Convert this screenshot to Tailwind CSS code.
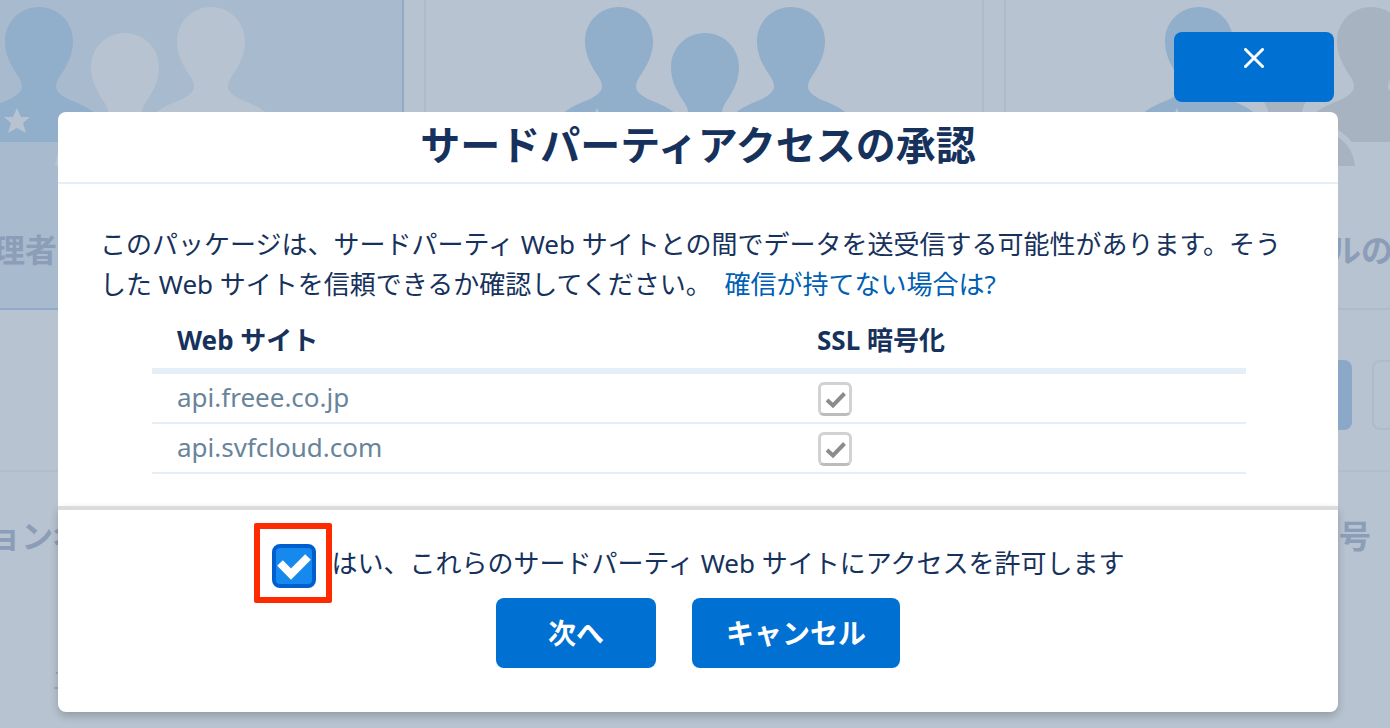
<!DOCTYPE html>
<html lang="ja">
<head>
<meta charset="utf-8">
<title>サードパーティアクセスの承認</title>
<script src="https://cdn.jsdelivr.net/npm/@tailwindcss/browser@4"></script>
</head>
<body class="min-h-screen bg-[#b7c3d0] font-['Noto_Sans','Noto_Sans_CJK_JP',sans-serif] text-[26px] leading-10 text-[#16325c]">
<svg class="hidden" aria-hidden="true">
  <defs>
    <path id="person" d="M0 0C19 0 34 15 34 34C34 48 28 58 23 66C19 72 17 75 17 80C17 84 22 89 31 93C41 97 51 101 59 109C65 115 69 123 70 133C70 134 69 135 68 135H-68C-69 135 -70 134 -70 133C-69 123 -65 115 -59 109C-51 101 -41 97 -31 93C-22 89 -17 84 -17 80C-17 75 -19 72 -23 66C-28 58 -34 48 -34 34C-34 15 -19 0 0 0Z"/>
    <path id="star" d="M0 -13L4 -4L13 -4L6 2L9 12L0 7L-9 12L-6 2L-13 -4L-4 -4Z"/>
  </defs>
</svg>
<div class="relative min-h-screen overflow-hidden">

  <!-- Install page, dimmed behind the dialog -->
  <div class="absolute inset-0 overflow-hidden text-[32px] font-bold text-[#8b9db7]" aria-hidden="true">
    <div class="flex h-[310px] justify-center gap-5 pl-[18px]">
      <div class="w-[560px] shrink-0 border-x-2 border-b-2 border-[#8fabc8] bg-[#a8bacd]">
        <svg class="mx-auto h-[166px] w-[320px]" viewBox="0 0 320 166">
          <use href="#person" x="75" y="7" fill="#91aeca"/><use href="#person" x="247" y="7" fill="#b7c3d0"/>
          <use href="#person" x="161" y="33" fill="#b7c3d0" stroke="#a8bacd" stroke-width="12" paint-order="stroke"/>
          <use href="#star" x="53" y="121" fill="#b7c3d0"/>
        </svg>
        <p class="mt-[64px] pl-[115px] whitespace-nowrap">管理者のみ</p>
      </div>
      <div class="w-[560px] shrink-0 border-x-2 border-b-2 border-[#afbbc9]">
        <svg class="mx-auto h-[166px] w-[320px]" viewBox="0 0 320 166">
          <g fill="#91aeca"><use href="#person" x="75" y="7"/><use href="#person" x="247" y="7"/></g>
          <use href="#person" x="161" y="33" fill="#91aeca" stroke="#b7c3d0" stroke-width="12" paint-order="stroke"/>
          <use href="#star" x="53" y="121" fill="#b7c3d0"/>
        </svg>
      </div>
      <div class="w-[560px] shrink-0 border-x-2 border-b-2 border-[#afbbc9]">
        <svg class="mx-auto h-[166px] w-[320px]" viewBox="0 0 320 166">
          <use href="#person" x="75" y="7" fill="#91aeca"/><use href="#person" x="247" y="7" fill="#a8b3c2"/>
          <use href="#person" x="161" y="33" fill="#a8b3c2" stroke="#b7c3d0" stroke-width="12" paint-order="stroke"/>
          <use href="#star" x="53" y="121" fill="#b7c3d0"/>
        </svg>
        <p class="mt-[64px] pl-[67px] whitespace-nowrap">特定のプロファイルの</p>
      </div>
    </div>
    <div class="flex h-[162px] items-center justify-end gap-5 border-b-2 border-[#b1bdca] pt-[10px]">
      <div class="h-[70px] w-[200px] rounded-lg bg-[#8ba8c9]"></div>
      <div class="-mr-5 h-[70px] w-[38px] rounded-lg border-2 border-[#afbbc9]"></div>
    </div>
    <div class="flex h-[128px] items-center justify-between pr-[19px]">
      <span class="-ml-[106px]">バージョン名</span>
      <span>番号</span>
    </div>
    <p class="pt-[60px] pl-[52px] text-[26px] font-normal text-[#8ba8c9]">エ</p>
  </div>

  <!-- Dialog -->
  <div class="relative flex min-h-screen flex-col pt-8 pr-[52px] pb-4 pl-[58px]">
    <button type="button" aria-label="閉じる" class="mr-1 flex h-[70px] w-40 justify-center self-end rounded-lg bg-[#0070d2] pt-4">
      <svg class="size-5" viewBox="0 0 20 20" fill="none" stroke="#fff" stroke-width="3" stroke-linecap="round"><path d="M1.500 1.500L18.500 18.500M18.500 1.500L1.500 18.500"/></svg>
    </button>
    <section role="dialog" aria-labelledby="title" class="mt-[10px]">
      <header class="rounded-t-lg border-b-2 border-[#e4eff8] bg-white">
        <h1 id="title" class="h-[70px] text-center text-[40px] leading-[66px] font-bold">サードパーティアクセスの承認</h1>
      </header>
      <div class="bg-white pt-10 pr-[38px] pb-8 pl-[42px]">
        <p>このパッケージは、サードパーティ Web サイトとの間でデータを送受信する可能性があります。そうした Web サイトを信頼できるか確認してください。 <a href="#" class="ml-[6px] text-[#005fb2]">確信が持てない場合は?</a></p>
        <div class="pr-[54px] pl-[52px]">
          <table class="w-full table-fixed border-collapse text-left">
            <colgroup><col class="w-[640px]"><col></colgroup>
            <thead>
              <tr class="border-b-[6px] border-[#e4eff8]">
                <th class="h-[67px] pl-[25px] align-top leading-[72px] font-bold"><span class="block h-[64px]">Web サイト</span></th>
                <th class="pl-[25px] align-top leading-[72px] font-bold"><span class="block h-[64px]">SSL 暗号化</span></th>
              </tr>
            </thead>
            <tbody class="text-[#68849a]">
              <tr class="border-b-2 border-[#e4eff8]">
                <td class="h-[52px] pl-[25px] pb-[2px]">api.freee.co.jp</td>
                <td class="pt-[2px] pl-[26px]">
                  <div class="relative size-[34px]">
                    <input type="checkbox" checked disabled aria-label="api.freee.co.jp SSL 暗号化" class="block size-[34px] appearance-none rounded-md border-3 border-[#d2d2d2] border-b-[#bcbcbc] bg-white">
                    <svg class="absolute inset-0" viewBox="0 0 34 34" fill="none" stroke="#8c8c8c" stroke-width="4"><path d="M9 18L15 23.500L26.500 11.500"/></svg>
                  </div>
                </td>
              </tr>
              <tr class="border-b-2 border-[#e4eff8]">
                <td class="h-[50px] pl-[25px] pb-[2px]">api.svfcloud.com</td>
                <td class="pt-[2px] pl-[26px]">
                  <div class="relative size-[34px]">
                    <input type="checkbox" checked disabled aria-label="api.svfcloud.com SSL 暗号化" class="block size-[34px] appearance-none rounded-md border-3 border-[#d2d2d2] border-b-[#bcbcbc] bg-white">
                    <svg class="absolute inset-0" viewBox="0 0 34 34" fill="none" stroke="#8c8c8c" stroke-width="4"><path d="M9 18L15 23.500L26.500 11.500"/></svg>
                  </div>
                </td>
              </tr>
            </tbody>
          </table>
        </div>
      </div>
      <footer class="rounded-b-lg border-t-4 border-[#d9dbdd] bg-white pt-[34px] pb-11 shadow-[0_4px_8px_rgba(0,0,0,0.2)]">
        <div class="flex items-start justify-center gap-4">
          <div class="relative size-11">
            <input id="grant" type="checkbox" checked class="block size-11 appearance-none rounded-lg border-4 border-[#005fcf] bg-[#1589ee]">
            <svg class="pointer-events-none absolute inset-0" viewBox="0 0 44 44" fill="none" stroke="#fff" stroke-width="8"><path d="M8 19L19 30L36 13"/></svg>
            <span class="pointer-events-none absolute -top-[21px] -left-[18px] h-20 w-[78px] rounded-xs border-6 border-[#ff2a00]"></span>
          </div>
          <label for="grant" class="leading-[38px]">はい、これらのサードパーティ Web サイトにアクセスを許可します</label>
        </div>
        <div class="mt-[10px] flex justify-center gap-9 text-[28px] font-bold text-white">
          <button type="button" class="h-[70px] min-w-40 rounded-lg bg-[#0070d2] px-[34px]">次へ</button>
          <button type="button" class="h-[70px] min-w-40 rounded-lg bg-[#0070d2] px-[34px]">キャンセル</button>
        </div>
      </footer>
    </section>
  </div>
</div>
</body>
</html>
